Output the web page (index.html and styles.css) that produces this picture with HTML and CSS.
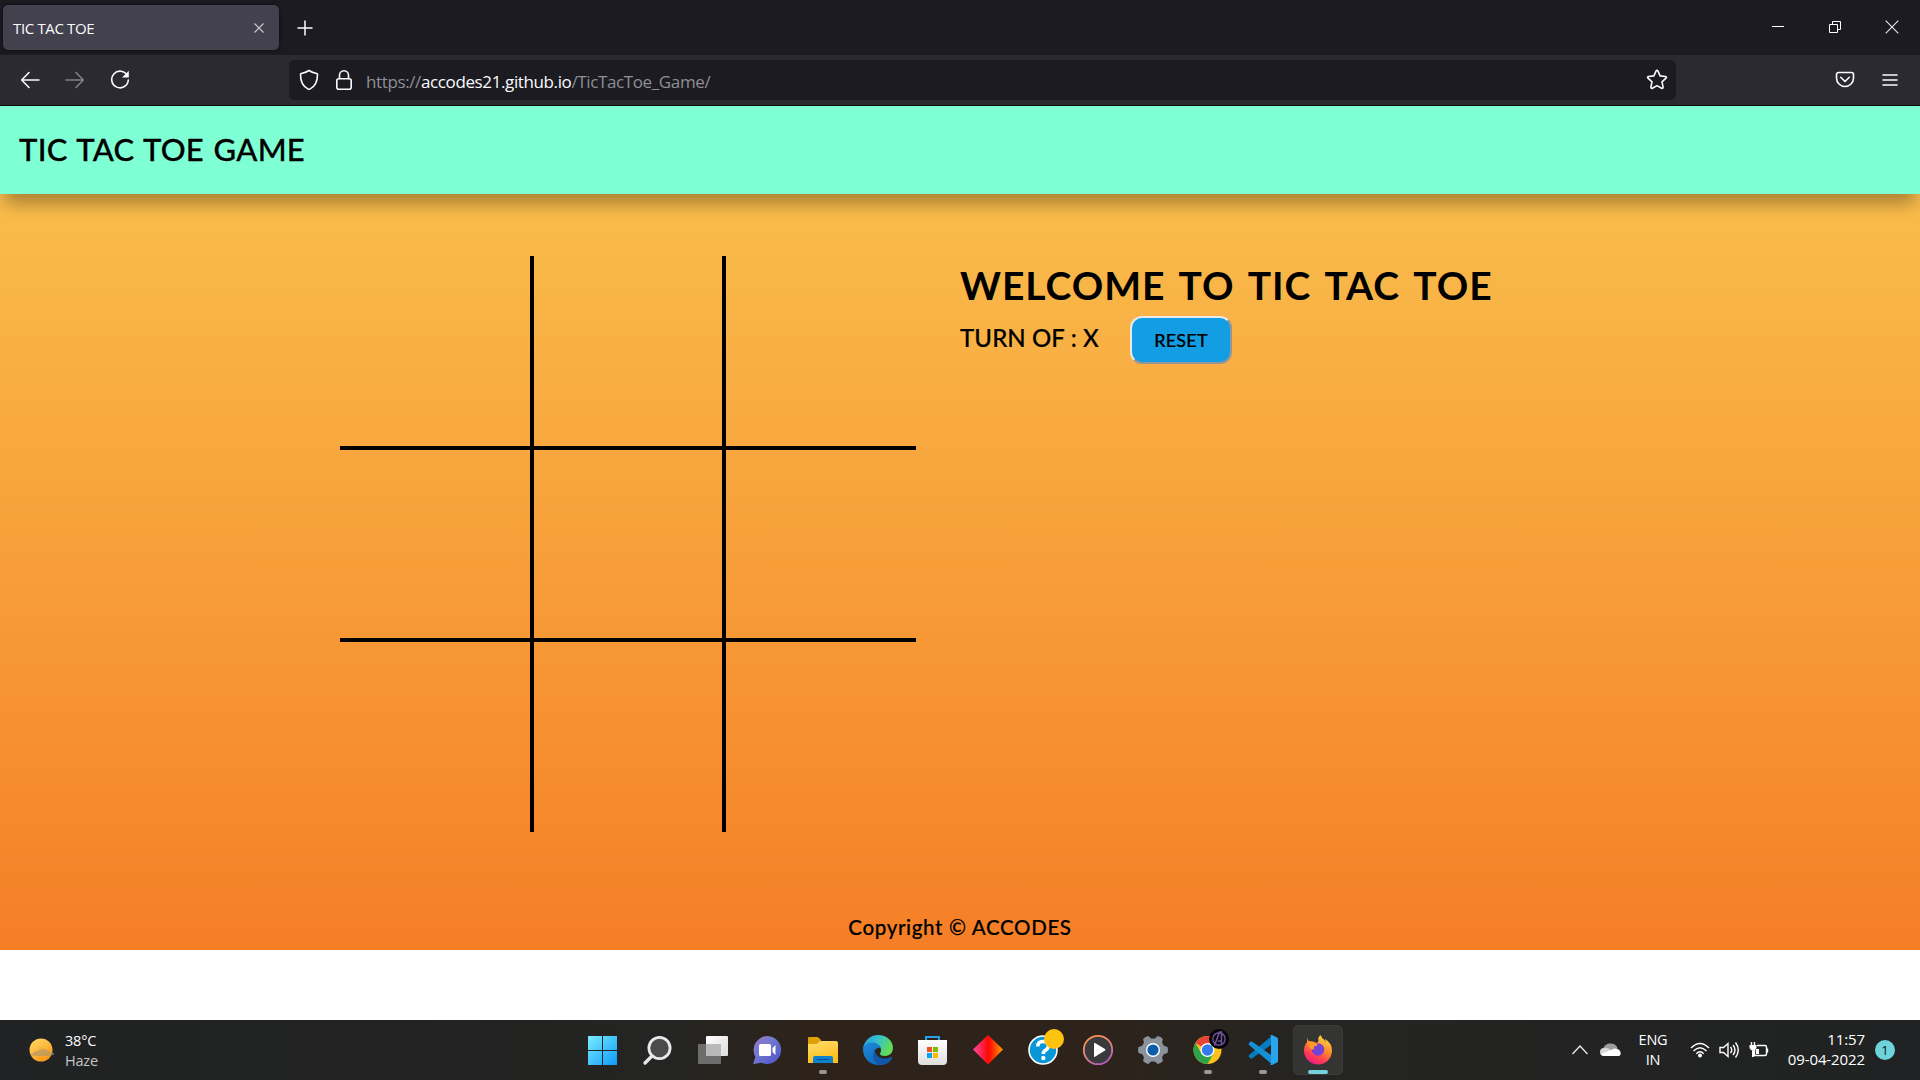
FILE: index.html
```html
<!DOCTYPE html>
<html lang="en">
<head>
<meta charset="utf-8">
<title>TIC TAC TOE</title>
<link rel="stylesheet" href="styles.css">
</head>
<body>
<div class="screen">
  <div class="tabbar">
    <div class="tab"><span class="tab-title">TIC TAC TOE</span>
      <svg class="tab-close" width="10" height="10" viewBox="0 0 10 10"><path d="M.5.5l9 9M9.5.5l-9 9" stroke="#c9c9ce" stroke-width="1.1"/></svg>
    </div>
    <svg class="new-tab" width="16" height="16" viewBox="0 0 16 16"><path d="M8 .5v15M.5 8h15" stroke="#fbfbfe" stroke-width="1.5"/></svg>
    <div class="window-controls">
      <svg width="14" height="14" viewBox="0 0 14 14"><path d="M1 6.5h12" stroke="#fff"/></svg>
      <svg width="14" height="14" viewBox="0 0 14 14"><path d="M1.500 4.500h8v8h-8zM4.500 4.500v-3h8v8h-3" fill="none" stroke="#fff"/></svg>
      <svg width="14" height="14" viewBox="0 0 14 14"><path d="M.7.7l12.600 12.600M13.300.7L.7 13.300" stroke="#e8e8ea" stroke-width="1.100"/></svg>
    </div>
  </div>
  <div class="navbar">
    <div class="nav-buttons">
      <svg width="20" height="20" viewBox="0 0 20 20"><path d="M19 10H2M9 2.500L1.700 10 9 17.500" class="line"/></svg>
      <svg class="dim" width="20" height="20" viewBox="0 0 20 20"><path d="M1 10h17M11 2.500l7.300 7.500-7.300 7.500" class="line"/></svg>
      <svg width="20" height="20" viewBox="0 0 20 20"><path d="M17.300 5.500A8.300 8.300 0 1 0 18.300 10" class="line"/><path d="M18.800.8v6.700h-6.700z" fill="#fbfbfe"/></svg>
    </div>
    <div class="urlbar">
      <svg width="20" height="22" viewBox="0 0 20 22"><path d="M10 1.500c2.500 1.700 5 2.600 7.600 3 .5.100.900.500.9 1 0 6.500-1.500 11.700-7.700 14.600q-.8.400-1.600 0C3 17.200 1.500 12 1.500 5.500c0-.5.400-.9.900-1C5 4.100 7.500 3.200 10 1.500z" class="line"/></svg>
      <svg width="18" height="22" viewBox="0 0 18 22"><rect x="1.800" y="9.800" width="14.400" height="10.400" rx="2" class="line"/><path d="M4.500 9.500V6.300a4.500 4.500 0 0 1 9 0v3.200" class="line"/></svg>
      <span class="url">https://<b>accodes21.github.io</b>/TicTacToe_Game/</span>
      <svg class="star" width="22" height="22" viewBox="0 0 22 22"><path d="M10 2.200q1-1.600 2 0l2.100 4.700 5.300.6q1.700.4.600 1.700l-4 3.700 1.100 5.200q.1 1.700-1.500 1.100L11 16.600l-4.600 2.600q-1.600.6-1.500-1.100L6 12.900 2 9.200q-1.100-1.300.6-1.700l5.300-.6z" class="line"/></svg>
    </div>
    <div class="nav-tools">
      <svg width="20" height="18" viewBox="0 0 20 18"><path d="M3.500 1.500h13a2 2 0 0 1 2 2V7a8.500 8.500 0 0 1-17 0V3.500a2 2 0 0 1 2-2z" class="line"/><path d="M5.700 6.300L10 10.500l4.300-4.200" class="line"/></svg>
      <svg width="16" height="14" viewBox="0 0 16 14"><path d="M1 2h14M1 7h14M1 12h14" class="line"/></svg>
    </div>
  </div>
  <main class="page">
    <header class="site-header">TIC TAC TOE GAME</header>
    <section class="game">
      <div class="board">
        <div class="cell"></div><div class="cell"></div><div class="cell"></div>
        <div class="cell"></div><div class="cell"></div><div class="cell"></div>
        <div class="cell"></div><div class="cell"></div><div class="cell"></div>
      </div>
      <div class="info">
        <h1>WELCOME TO TIC TAC TOE</h1>
        <div class="status"><span class="turn">TURN OF : X</span><button class="reset">RESET</button></div>
      </div>
    </section>
    <footer class="site-footer"><span>Copyright © ACCODES</span></footer>
  </main>
  <div class="taskbar">
    <div class="weather">
      <svg width="28" height="26" viewBox="0 0 28 26"><defs><linearGradient id="sun" x1="0" y1="0" x2=".6" y2="1"><stop stop-color="#ffdc6b"/><stop offset="1" stop-color="#fb9a16"/></linearGradient></defs><circle cx="13" cy="13" r="11.500" fill="url(#sun)"/><path d="M4 17q2-3 6-3 4-4 8-1 3 0 4 2 5 0 4 3-5 1-12 1-8 0-12-1 0-1 2-1z" fill="#a99477" opacity=".6"/></svg>
      <div class="weather-text"><div>38°C</div><div class="muted">Haze</div></div>
    </div>
    <div class="apps">
      <div class="app"><svg viewBox="0 0 50 60"><defs><linearGradient id="win" x1="10" y1="16" x2="40" y2="45" gradientUnits="userSpaceOnUse"><stop stop-color="#7beeff"/><stop offset="1" stop-color="#0a98fb"/></linearGradient></defs><path d="M10 16h14v14H10zM25 16h14v14H25zM10 31h14v14H10zM25 31h14v14H25z" fill="url(#win)"/></svg></div>
      <div class="app"><svg viewBox="0 0 50 60"><path d="M19 36l-7 7" stroke="#e2e6e8" stroke-width="3.400" stroke-linecap="round"/><circle cx="26.500" cy="28" r="10.600" fill="#4b4b49" stroke="#e6eaec" stroke-width="2.800"/></svg></div>
      <div class="app"><svg viewBox="0 0 50 60"><defs><linearGradient id="tv" x2="1" y2="1"><stop stop-color="#fff"/><stop offset="1" stop-color="#dcdcdc"/></linearGradient></defs><rect x="18" y="16" width="22" height="20" rx="1" fill="url(#tv)"/><rect x="10" y="24" width="23" height="20" rx="1" fill="#6d6d6d"/><path d="M18 24h15v12H18z" fill="#b9b9b9"/></svg></div>
      <div class="app"><svg viewBox="0 0 50 60"><defs><linearGradient id="chat" x1="0" y1="0" x2="1" y2="1"><stop stop-color="#a173c6"/><stop offset=".4" stop-color="#717bd0"/><stop offset="1" stop-color="#4b4fc8"/></linearGradient></defs><path d="M24.500 16a14 14 0 1 1-6 26.800L11 44q-1 0-.6-1.200l2-5.800A14 14 0 0 1 24.500 16z" fill="url(#chat)"/><rect x="16" y="24" width="12" height="12" rx="1.500" fill="#fff"/><path d="M29.500 28l3-3v10l-3-3z" fill="#fff"/></svg></div>
      <div class="app"><svg viewBox="0 0 50 60"><defs><linearGradient id="fold" x2=".4" y2="1"><stop stop-color="#ffdf70"/><stop offset="1" stop-color="#fdbc19"/></linearGradient></defs><path d="M10 18q0-1 1-1h8q1 0 2 1l2 2v6H10z" fill="#dfa008"/><path d="M10 24h8q2 0 3-2 1-1 3-1h14q2 0 2 2v20H10z" fill="url(#fold)"/><path d="M15 43v-5q0-2 2-2h16q2 0 2 2v5z" fill="#0f7fd0"/><path d="M19 39.500h12" stroke="#0a4e92"/></svg><i class="dot"></i></div>
      <div class="app"><svg viewBox="0 0 50 60"><defs><linearGradient id="e1" x2="1" y2=".4"><stop stop-color="#2694de"/><stop offset=".5" stop-color="#35c1cf"/><stop offset="1" stop-color="#62dc55"/></linearGradient><linearGradient id="e2" x2=".7" y2="1"><stop stop-color="#1b8bdc"/><stop offset="1" stop-color="#1163b8"/></linearGradient></defs><path d="M10 29c1-8 7-14 15-14 9 0 15 6 15 13 0 5-4 8-8 8-3 0-5-1-5-2s1-2 1-4c0-4-4-7-9-7-4 0-7 2-9 6z" fill="url(#e1)"/><path d="M10 28c2-4 5-5.500 9-5.500 5 0 8 2.500 9 5.500-4-1-7 2-7 5.500 0 6 6 8.500 10 8.500 3 0 5.500-1 6.500-2-3 4-7 5-12 5-9 0-16-7-15.500-17z" fill="url(#e2)"/><path d="M22 31c-4 4-2 12 5 13.800C32 45 37 43 39 38c.5-1-.5-1.500-1.500-1-5 3-14 2-15.500-6z" fill="#1159a8"/></svg></div>
      <div class="app"><svg viewBox="0 0 50 60"><defs><linearGradient id="st" x2="0" y2="1"><stop stop-color="#fff"/><stop offset="1" stop-color="#dedede"/></linearGradient></defs><path d="M18 21v-4h13v4" fill="none" stroke="#27a0e8" stroke-width="2"/><path d="M10 20h29v21q0 4-4 4h-21q-4 0-4-4z" fill="url(#st)"/><path d="M19 27h5v5h-5z" fill="#f25022"/><path d="M25 27h5v5h-5z" fill="#7fba00"/><path d="M19 33h5v5h-5z" fill="#00a4ef"/><path d="M25 33h5v5h-5z" fill="#ffb900"/></svg></div>
      <div class="app"><svg viewBox="0 0 50 60"><defs><linearGradient id="dia"><stop stop-color="#ff4ba8"/><stop offset=".5" stop-color="#ff0808"/><stop offset=".6" stop-color="#ff1b00"/><stop offset="1" stop-color="#ffa000"/></linearGradient></defs><path d="M25 15L40 29.500 25 44.500 10 29.500z" fill="url(#dia)"/></svg></div>
      <div class="app"><svg viewBox="0 0 50 60"><circle cx="25" cy="30" r="14" fill="#0797d8" stroke="#fff" stroke-width="1.600"/><path d="M19.800 26.500q0-5 5-5 5.500 0 5.500 4.500 0 2.500-2.800 4.300-2.200 1.300-2.200 3.700" stroke="#fff" stroke-width="3.500" fill="none"/><circle cx="25.300" cy="38" r="2.200" fill="#fff"/><circle cx="36" cy="19" r="10" fill="#ffc20e"/></svg></div>
      <div class="app"><svg viewBox="0 0 50 60"><defs><linearGradient id="mp" x1=".2" y1="0" x2=".7" y2="1"><stop stop-color="#ff9148"/><stop offset=".5" stop-color="#e6847f"/><stop offset="1" stop-color="#b25fc0"/></linearGradient></defs><circle cx="25" cy="30" r="14.200" fill="#393a3c" stroke="url(#mp)" stroke-width="1.800"/><path d="M21 23.500q0-1 1-.5l10 6q1 .8 0 1.500l-10 6.300q-1 .5-1-.5z" fill="#fff"/></svg></div>
      <div class="app"><svg viewBox="0 0 50 60"><g fill="#8a939c"><circle cx="25" cy="30" r="11.500"/><g id="tooth" transform="rotate(30 25 30)"><path d="M22 15.500q3-1 6 0l2 6H20z"/><path d="M22 44.500q3 1 6 0l2-6H20z"/></g><use href="#tooth" transform="rotate(60 25 30)"/><use href="#tooth" transform="rotate(120 25 30)"/></g><circle cx="25" cy="30" r="7" fill="#fff"/><circle cx="25" cy="30" r="5.600" fill="#0b5cad"/></svg></div>
      <div class="app"><svg viewBox="0 0 50 60"><circle cx="24.500" cy="30" r="14" fill="#fbc116"/><path d="M24.500 30L12.400 23a14 14 0 0 1 24.200 0H24.500z" fill="#e54335"/><path d="M12.400 23a14 14 0 0 0 12.100 21l6-10.500L24.500 30l-6 3.500z" fill="#2da24c"/><circle cx="24.500" cy="30" r="7" fill="#fff"/><circle cx="24.500" cy="30" r="5.700" fill="#327cee"/><circle cx="36" cy="19" r="10" fill="#050509"/><circle cx="36" cy="19" r="6.200" fill="none" stroke="#6a4a93" stroke-width="1.500"/><path d="M31.500 25.500L36.500 12h2v13M35 21h3.500" fill="none" stroke="#6e539c" stroke-width="1.600"/></svg><i class="dot"></i></div>
      <div class="app"><svg viewBox="0 0 50 60"><path d="M11 35l22-18.500v8.500L14 38.500q-1 .6-1.700-.2l-1.500-1.500q-.6-.9.200-1.800z" fill="#087abf"/><path d="M11 25l22 18.500V35L14 21.500q-1-.6-1.700.2l-1.500 1.500q-.6.900.2 1.800z" fill="#168fd4"/><path d="M32 15.300q1-.6 2-.2l5 2.400q1 .5 1 1.500v22q0 1-1 1.500l-5 2.400q-1 .4-2-.2 1 0 1-1.700V17q0-1.700-1-1.700z" fill="#2aa5ed"/></svg><i class="dot"></i></div>
      <div class="app active"><svg viewBox="0 0 50 60"><defs><linearGradient id="ff" x1=".8" y1="0" x2=".3" y2="1"><stop stop-color="#ffe14a"/><stop offset=".4" stop-color="#ff9428"/><stop offset=".75" stop-color="#ff3b55"/><stop offset="1" stop-color="#e91d87"/></linearGradient></defs><path d="M14 17q0 2 1.500 4l4.500.5L24 23l1.500-2q-1-4 2-6 1 3 4 5l1 2.500q0-2-.5-3.500 7 4 7 11.500a14 14 0 0 1-28 0c0-4 1.500-7 3-8z" fill="url(#ff)"/><circle cx="25" cy="29.500" r="6.200" fill="#7541d6"/><path d="M14 23.500q4-3 8 0l3 .5q-1 2-4 2.500-1 2 1 3-3 0-5-1z" fill="#ff9a25"/></svg><i class="dot wide"></i></div>
    </div>
    <div class="tray">
      <svg width="18" height="12" viewBox="0 0 18 12"><path d="M1.500 10L9 2l7.500 8" fill="none" stroke="#e9e9e9" stroke-width="1.300"/></svg>
      <svg class="cloud" width="22" height="16" viewBox="0 0 22 16"><path d="M3 7q2-6 8-5.500Q17 2 17.500 7L12 10z" fill="#9d9d9d"/><path d="M4 14a4 4 0 0 1 0-8q4-1 8 3 5-4 8 0 2 5-2 5z" fill="#d8d8d8"/><path d="M4 14q-2 0-3-2l10-4q4-3 8 0 3 3 0 6z" fill="#fff"/></svg>
      <div class="lang"><div>ENG</div><div>IN</div></div>
      <div class="status-icons">
      <svg width="20" height="16" viewBox="0 0 20 16"><path d="M1 6q9-9 18 0M3.500 9q6.500-6.500 13 0M6.300 11.700q3.700-3.700 7.400 0" class="tray-line"/><circle cx="10" cy="13.600" r="2" fill="#fff"/></svg>
      <svg width="21" height="18" viewBox="0 0 21 18"><path d="M1 6.500h3.500L9 2.500v13l-4.500-4H1z" class="tray-line"/><path d="M11.500 6q2.500 3 0 6M14 4q4 5 0 10M16.500 1.500q5.500 7.500 0 15" class="tray-line"/></svg>
      <svg width="20" height="18" viewBox="0 0 20 18"><path d="M8 4.500h8q1.500 0 1.500 1.500v7q0 1.500-1.500 1.500H5.500V9M18.500 7.500v4" class="tray-line"/><path d="M2.500 1v3M5.500 1v3" class="tray-line"/><path d="M.5 4h7v3q-1 2.500-3.500 2.500T.5 7zM3 9h2v7H3zM7 8h3v5H7z" fill="#fff"/></svg>
      </div>
      <div class="clock"><div>11:57</div><div>09-04-2022</div></div>
      <span class="notice">1</span>
    </div>
  </div>
</div>
</body>
</html>
```
FILE: styles.css
```css
* { box-sizing: border-box; }
body { margin: 0; font-family: "Open Sans", "Noto Sans", sans-serif; }
svg { display: block; flex: none; }
.screen { width: 1920px; height: 1080px; overflow: hidden; display: flex; flex-direction: column; background: #fff; }
.line { fill: none; stroke: #fbfbfe; stroke-width: 1.6; stroke-linecap: round; stroke-linejoin: round; }

.tabbar { height: 55px; background: #1c1b22; display: flex; align-items: flex-start; padding: 5px 21px 0 3px; }
.tab { width: 276px; height: 45px; border-radius: 5px; background: #42414d; color: #fbfbfe; display: flex; align-items: center; justify-content: space-between; padding: 0 15px 0 10px; box-shadow: 0 0 4px #0a0a0d; }
.tab-title { font-size: 15px; letter-spacing: -.35px; }
.new-tab { margin: 15px 0 0 18px; }
.window-controls { margin-left: auto; display: flex; gap: 43px; padding-top: 15px; }

.navbar { height: 51px; background: #2b2a33; border-bottom: 1px solid #0c0c0d; display: flex; align-items: center; }
.nav-buttons { width: 289px; display: flex; gap: 25px; padding-left: 20px; }
.dim { opacity: .42; }
.urlbar { width: 1387px; height: 40px; border-radius: 5px; background: #1c1b22; display: flex; align-items: center; padding: 0 8px 0 10px; }
.urlbar svg + svg { margin-left: 16px; }
.url { color: #8f8f95; font-size: 17px; margin: 2px 0 0 13px; letter-spacing: -.38px; }
.url b { font-weight: 400; color: #fbfbfe; }
.urlbar .star { margin-left: auto; }
.nav-tools { margin-left: auto; width: 85px; display: flex; align-items: center; gap: 27px; }

.page { height: 844px; background: linear-gradient(#fac450, #f57e26); color: #000; font-family: Lato, "Open Sans", sans-serif; font-weight: 500; display: flex; flex-direction: column; }
.site-header { height: 88px; background: #7fffd4; padding: 0 0 0 19px; font-size: 31px; line-height: 87px; letter-spacing: .25px; word-spacing: 1.5px; -webkit-text-stroke: .3px #000; box-shadow: 0 15px 16px -5px rgba(0, 0, 0, .31); }
.game { flex: 1; display: flex; align-items: flex-start; padding: 62px 0 0 340px; }
.board { display: grid; grid-template: repeat(3, 192px) / repeat(3, 192px); }
.cell { border: 2px solid #000; }
.cell:nth-child(3n + 1) { border-left: 0; }
.cell:nth-child(3n) { border-right: 0; }
.cell:nth-child(-n + 3) { border-top: 0; }
.cell:nth-child(n + 7) { border-bottom: 0; }
.info { padding: 0 0 0 44px; }
.info h1 { margin: 0; height: 60px; font-size: 39px; line-height: 58px; font-weight: 700; letter-spacing: .95px; word-spacing: 4px; white-space: nowrap; }
.status { display: flex; align-items: center; height: 48px; }
.turn { font-size: 24px; width: 170px; padding-bottom: 5px; letter-spacing: .1px; -webkit-text-stroke: .2px #000; }
.reset { width: 102px; height: 48px; border: 2px outset #e9e9ed; border-radius: 12px; background: #139ee3; color: #000; font: 500 18px Lato, sans-serif; letter-spacing: .2px; padding: 0; -webkit-text-stroke: .2px #000; }
.site-footer { height: 48px; text-align: center; font-size: 20.5px; line-height: 50px; letter-spacing: .65px; -webkit-text-stroke: .2px #000; }

.taskbar { margin-top: 70px; height: 60px; background: linear-gradient(90deg, #202223, #242422 35%, #2e231a 43%, #2d231b 57%, #252422 68%, #202223); color: #fff; display: flex; font-size: 14.5px; line-height: 20px; }
.weather { width: 578px; display: flex; align-items: center; padding-left: 28px; gap: 9px; letter-spacing: -.2px; }
.weather-text { padding-top: 2px; }
.muted { color: #c6c6c6; }
.apps { display: flex; gap: 5px; }
.app { width: 50px; height: 60px; position: relative; }
.app svg { width: 50px; height: 60px; position: relative; }
.active::before { content: ""; position: absolute; inset: 5px 0; border-radius: 5px; background: #343433; border: 1px solid #3b3b3a; }
.dot { position: absolute; left: 21px; top: 50px; width: 8px; height: 4px; border-radius: 2px; background: #9b9895; }
.dot.wide { left: 15px; width: 20px; background: #73d2da; }
.tray { margin-left: auto; width: 349px; display: flex; align-items: center; }
.cloud { margin-left: 11px; }
.lang { width: 50px; margin-left: 6px; text-align: center; letter-spacing: -.2px; }
.tray-line { fill: none; stroke: #fff; stroke-width: 1.4; }
.status-icons { display: flex; align-items: center; gap: 9px; margin-left: 12px; }
.clock { width: 90px; text-align: right; margin-left: 6px; font-size: 15px; letter-spacing: -.1px; white-space: nowrap; position: relative; top: -1px; }
.notice { width: 20px; height: 20px; margin-left: 10px; border-radius: 50%; background: #6fd3dc; color: #111; font-size: 13px; text-align: center; }
```
